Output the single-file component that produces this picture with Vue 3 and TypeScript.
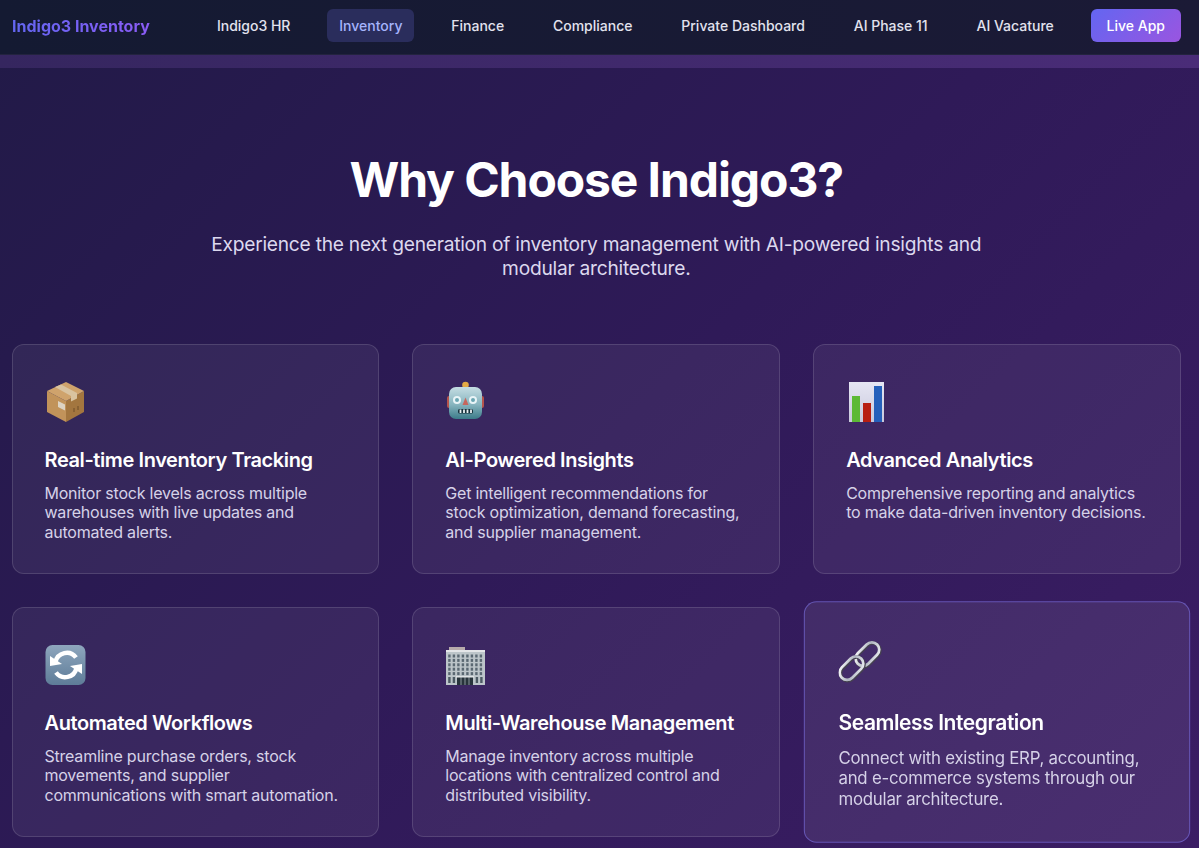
<script setup lang="ts">
interface Feature {
  icon: string;
  title: string;
  text: string;
  active?: boolean;
}

const navLinks = [
  { label: 'Indigo3 HR' },
  { label: 'Inventory', active: true },
  { label: 'Finance' },
  { label: 'Compliance' },
  { label: 'Private Dashboard' },
  { label: 'AI Phase 11' },
  { label: 'AI Vacature' }
];

const features: Feature[] = [
  { icon: 'box', title: 'Real-time Inventory Tracking', text: 'Monitor stock levels across multiple warehouses with live updates and automated alerts.' },
  { icon: 'robot', title: 'AI-Powered Insights', text: 'Get intelligent recommendations for stock optimization, demand forecasting, and supplier management.' },
  { icon: 'chart', title: 'Advanced Analytics', text: 'Comprehensive reporting and analytics to make data-driven inventory decisions.' },
  { icon: 'sync', title: 'Automated Workflows', text: 'Streamline purchase orders, stock movements, and supplier communications with smart automation.' },
  { icon: 'office', title: 'Multi-Warehouse Management', text: 'Manage inventory across multiple locations with centralized control and distributed visibility.' },
  { icon: 'link', title: 'Seamless Integration', text: 'Connect with existing ERP, accounting, and e-commerce systems through our modular architecture.', active: true }
];

// window grid of the office building emoji
const officeWindows: { x: number; y: number }[] = [];
for (let row = 0; row < 5; row++) {
  for (let col = 0; col < 8; col++) {
    officeWindows.push({ x: 3.2 + col * 4.5, y: 10.5 + row * 4.4 });
  }
}
</script>

<template>
  <div class="page">
    <nav class="navbar">
      <div class="brand">Indigo3 Inventory</div>
      <div class="nav-links">
        <a v-for="link in navLinks" :key="link.label" class="nav-link" :class="{ active: link.active }">{{ link.label }}</a>
        <a class="live-btn">Live App</a>
      </div>
    </nav>

    <div class="main">
      <div class="strip"></div>
      <section class="features">
        <header class="features-head">
          <h1>Why Choose Indigo3?</h1>
          <p>Experience the next generation of inventory management with AI-powered insights and modular architecture.</p>
        </header>

        <div class="grid">
          <article v-for="f in features" :key="f.title" class="card" :class="{ active: f.active }">
            <div class="icon">
              <svg v-if="f.icon === 'box'" viewBox="0 0 42 42" width="42" height="42">
                <path d="M2 10 21 20 21 41 2 31Z" fill="#c1935a" />
                <path d="M21 20 39 10 39 31 21 41Z" fill="#a3763f" />
                <path d="M2 10 21 1 39 10 21 20Z" fill="#cfa36c" />
                <path d="M10 6 16 3.4 32 12 32 17.5 26 20.500 26 15Z" fill="#d9c3a0" />
                <path d="M13 20 20 23.6 20 29.5 13 26Z" fill="#ddd3c2" />
                <path d="M29 31v-4M33 29v-4" stroke="#6f4d28" stroke-width="1" />
              </svg>

              <svg v-else-if="f.icon === 'robot'" viewBox="0 0 42 42" width="42" height="42">
                <defs>
                  <linearGradient id="robotFace" x1="0" y1="0" x2="0" y2="1">
                    <stop offset="0" stop-color="#c5dde3" />
                    <stop offset="0.55" stop-color="#86b4be" />
                    <stop offset="1" stop-color="#3c7b89" />
                  </linearGradient>
                </defs>
                <rect x="2" y="15" width="4" height="12" rx="2" fill="#b5544c" />
                <rect x="35" y="15" width="4" height="12" rx="2" fill="#b5544c" />
                <circle cx="20.500" cy="4" r="3.300" fill="#e3aa45" />
                <rect x="4" y="6" width="33" height="32" rx="7" fill="url(#robotFace)" />
                <circle cx="12" cy="19" r="4" fill="#e8f4f7" />
                <circle cx="12" cy="19" r="2" fill="#6aa6b3" />
                <circle cx="28" cy="19" r="4" fill="#e8f4f7" />
                <circle cx="28" cy="19" r="2" fill="#6aa6b3" />
                <path d="M20.500 16.500 23.500 24H17.500Z" fill="#c7665c" />
                <rect x="13" y="28" width="15" height="4.500" rx="1.500" fill="#16323c" />
                <path d="M15.500 28.500v3.500M19 28.500v3.500M22.500 28.500v3.500M26 28.500v3.500" stroke="#e8f0f2" stroke-width="1.800" />
              </svg>

              <svg v-else-if="f.icon === 'chart'" viewBox="0 0 42 42" width="42" height="42">
                <defs>
                  <linearGradient id="chartBg" x1="0" y1="0" x2="0" y2="1">
                    <stop offset="0" stop-color="#e6e6f4" />
                    <stop offset="1" stop-color="#c9c9dc" />
                  </linearGradient>
                </defs>
                <rect x="3" y="1" width="35" height="40" fill="url(#chartBg)" />
                <rect x="6" y="15" width="8" height="26" fill="#5cb935" />
                <rect x="17" y="22" width="8" height="19" fill="#b81f12" />
                <rect x="28" y="5" width="8" height="36" fill="#2560bb" />
              </svg>

              <svg v-else-if="f.icon === 'sync'" viewBox="0 0 42 42" width="42" height="42">
                <defs>
                  <linearGradient id="syncBg" x1="0" y1="0" x2="0" y2="1">
                    <stop offset="0" stop-color="#8ea6bd" />
                    <stop offset="1" stop-color="#5e7c98" />
                  </linearGradient>
                </defs>
                <rect x="0.500" y="1" width="40" height="40" rx="7" fill="url(#syncBg)" />
                <path d="M10.500 18A11.500 11.500 0 0 1 31 13.500" fill="none" stroke="#fff" stroke-width="4.500" />
                <path d="M5 12 17 20 5 22Z" fill="#fff" />
                <path d="M31.500 24A11.500 11.500 0 0 1 11 28.500" fill="none" stroke="#fff" stroke-width="4.500" />
                <path d="M37 30 25 22 37 20Z" fill="#fff" />
              </svg>

              <svg v-else-if="f.icon === 'office'" viewBox="0 0 42 42" width="42" height="42">
                <rect x="4" y="3" width="16" height="4" fill="#b7abab" />
                <rect x="1" y="6" width="39" height="35" fill="#bcc5c9" />
                <rect x="1" y="6" width="39" height="2" fill="#e4e6e8" />
                <rect v-for="(w, i) in officeWindows" :key="i" :x="w.x" :y="w.y" width="2.400" height="3" fill="#5a6872" />
                <rect x="12" y="33" width="16" height="8" fill="#28343b" />
                <path d="M16 33v8M20 33v8M24 33v8" stroke="#8a969d" stroke-width="1" />
                <rect x="11" y="32" width="18" height="1.500" fill="#dfe3e5" />
                <rect x="3.200" y="33" width="2.400" height="6" fill="#4c5a63" />
                <rect x="7.700" y="33" width="2.400" height="6" fill="#4c5a63" />
                <rect x="30.700" y="33" width="2.400" height="6" fill="#4c5a63" />
                <rect x="35.200" y="33" width="2.400" height="6" fill="#4c5a63" />
              </svg>

              <svg v-else viewBox="0 0 42 42" width="42" height="42" fill="none">
                <defs>
                  <linearGradient id="chainMetal" x1="0" y1="0" x2="1" y2="1">
                    <stop offset="0" stop-color="#ffffff" />
                    <stop offset="0.5" stop-color="#aeb4bf" />
                    <stop offset="1" stop-color="#eef0f4" />
                  </linearGradient>
                </defs>
                <g transform="rotate(-45 27.600 13.300)">
                  <rect x="14.600" y="7.300" width="26" height="14" rx="7" stroke="#45424f" stroke-width="3.400" />
                  <rect x="14.600" y="6.300" width="26" height="14" rx="7" stroke="url(#chainMetal)" stroke-width="2.600" />
                </g>
                <g transform="rotate(-45 12.400 26.700)">
                  <rect x="-0.600" y="20.700" width="26" height="14" rx="7" stroke="#45424f" stroke-width="3.400" />
                  <rect x="-0.600" y="19.700" width="26" height="14" rx="7" stroke="url(#chainMetal)" stroke-width="2.600" />
                </g>
              </svg>
            </div>
            <h3>{{ f.title }}</h3>
            <p>{{ f.text }}</p>
          </article>
        </div>
      </section>
    </div>
  </div>
</template>

<style>
html,
body {
  margin: 0;
  background: #2c1a52;
  overflow: hidden;
}
</style>

<style scoped>
.page {
  height: 848px;
  overflow: hidden;
  font-family: Inter, "Liberation Sans", sans-serif;
  color: #fff;
}

.navbar {
  height: 55px;
  box-sizing: border-box;
  display: flex;
  align-items: center;
  justify-content: space-between;
  padding: 9px 18px 12px 12px;
  background: linear-gradient(90deg, #141a32, #1b1a36);
  border-bottom: 1px solid #23233f;
}

.brand {
  font-size: 16px;
  font-weight: 700;
  background: linear-gradient(90deg, #6366f1, #8b5cf6);
  -webkit-background-clip: text;
  background-clip: text;
  color: transparent;
}

.nav-links {
  display: flex;
  align-items: center;
  gap: 24.8px;
}

.nav-link {
  padding: 8px 12px;
  border-radius: 6px;
  font-size: 14px;
  font-weight: 500;
  line-height: 17px;
  color: #e2e2ee;
}

.nav-link.active {
  background: #2a2d5c;
  color: #a5b4fc;
}

.live-btn {
  padding: 8px 16px;
  border-radius: 6px;
  font-size: 14px;
  font-weight: 500;
  line-height: 17px;
  color: #fff;
  background: linear-gradient(135deg, #6366f1, #9a55e0);
}

.main {
  height: 793px;
  background: linear-gradient(135deg, #221a48 0%, #2f1a58 50%, #3b1d64 100%);
}

.strip {
  height: 13px;
  background: linear-gradient(90deg, #35265f, #4a2c78);
}

.features {
  padding: 0 18px 0 11.5px;
}

.features-head {
  padding-top: 82px;
  text-align: center;
}

.features-head h1 {
  margin: 0;
  font-size: 48px;
  line-height: 60px;
  font-weight: 700;
  letter-spacing: -1.1px;
}

.features-head p {
  width: 800px;
  margin: 22px auto 0;
  font-size: 19.2px;
  line-height: 24px;
  letter-spacing: -0.25px;
  color: #dcd8ee;
}

.grid {
  display: grid;
  grid-template-columns: repeat(3, 1fr);
  gap: 33px;
  margin-top: 64px;
}

.card {
  height: 230px;
  box-sizing: border-box;
  padding: 32px;
  border: 1px solid rgba(255, 255, 255, 0.13);
  border-radius: 12px;
  background: rgba(255, 255, 255, 0.06);
}

.card.active {
  transform: scale(1.05);
  border-color: rgba(129, 120, 240, 0.55);
  background: rgba(255, 255, 255, 0.08);
}

.icon {
  height: 52px;
  margin: 4px 0 0;
  display: flex;
  align-items: flex-start;
}

.card h3 {
  margin: 15px 0 0;
  font-size: 20px;
  line-height: 24px;
  font-weight: 600;
  letter-spacing: -0.4px;
}

.card p {
  margin: 11.7px 0 0;
  font-size: 16px;
  line-height: 19.5px;
  letter-spacing: -0.22px;
  color: #d6d2e8;
}
</style>
